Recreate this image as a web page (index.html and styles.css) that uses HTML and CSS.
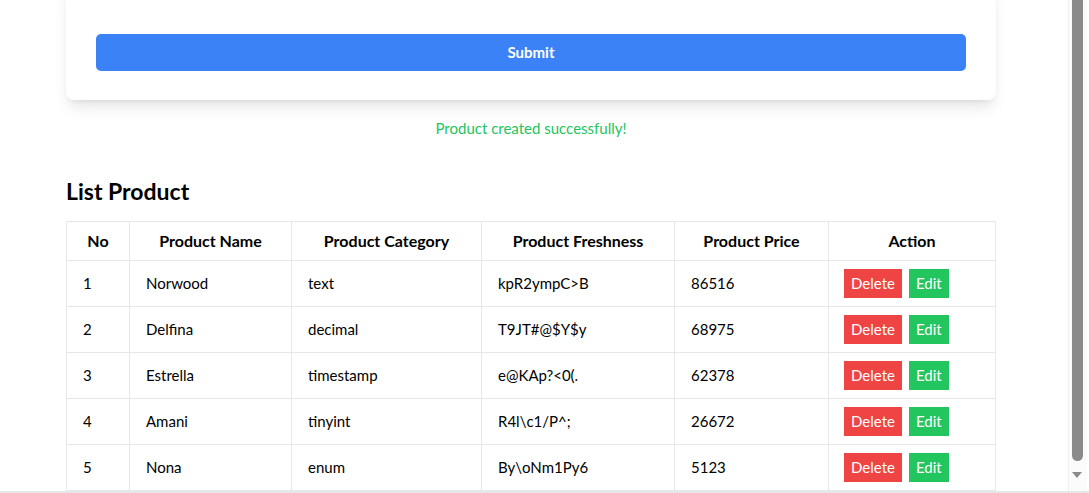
FILE: index.html
```html
<!DOCTYPE html>
<html lang="en">
<head>
<meta charset="utf-8">
<title>Products</title>
<link rel="stylesheet" href="styles.css">
</head>
<body>
<div class="viewport">
  <main class="container">
    <section class="card">
      <button class="submit" type="button">Submit</button>
    </section>
    <p class="success">Product created successfully!</p>
    <h2 class="title">List Product</h2>
    <table class="products">
      <thead>
        <tr>
          <th class="c-no">No</th>
          <th class="c-name">Product Name</th>
          <th class="c-cat">Product Category</th>
          <th class="c-fresh">Product Freshness</th>
          <th class="c-price">Product Price</th>
          <th class="c-act">Action</th>
        </tr>
      </thead>
      <tbody>
        <tr><td>1</td><td>Norwood</td><td>text</td><td>kpR2ympC&gt;B</td><td>86516</td><td class="actions"><span class="btn del">Delete</span><span class="btn edit">Edit</span></td></tr>
        <tr><td>2</td><td>Delfina</td><td>decimal</td><td>T9JT#@$Y$y</td><td>68975</td><td class="actions"><span class="btn del">Delete</span><span class="btn edit">Edit</span></td></tr>
        <tr><td>3</td><td>Estrella</td><td>timestamp</td><td>e@KAp?&lt;0(.</td><td>62378</td><td class="actions"><span class="btn del">Delete</span><span class="btn edit">Edit</span></td></tr>
        <tr><td>4</td><td>Amani</td><td>tinyint</td><td>R4l\c1/P^;</td><td>26672</td><td class="actions"><span class="btn del">Delete</span><span class="btn edit">Edit</span></td></tr>
        <tr><td>5</td><td>Nona</td><td>enum</td><td>By\oNm1Py6</td><td>5123</td><td class="actions"><span class="btn del">Delete</span><span class="btn edit">Edit</span></td></tr>
      </tbody>
    </table>
  </main>
</div>
<div class="scrollbar"><div class="thumb"></div><div class="arrow"></div></div>
<div class="winedge"></div>
</body>
</html>
```
FILE: styles.css
```css
* { box-sizing: border-box; }
html, body { margin: 0; padding: 0; height: 100%; overflow: hidden; background: #fff; }
body { font-family: Lato, "Noto Sans", sans-serif; color: #000; }
.viewport { width: 1062px; }
.container { width: 930px; margin: 0 auto; }
.card {
  margin-top: -20px;
  padding: 54px 30px 29px;
  background: #fff;
  border-radius: 8px;
  box-shadow: 0 10px 15px -3px rgba(0,0,0,0.1), 0 4px 6px -4px rgba(0,0,0,0.1);
}
.submit {
  display: block; width: 100%; height: 37px; border: 0; border-radius: 5px; padding: 0 0 2px;
  background: #3b82f6; color: #fff; font: 700 15px Lato, sans-serif;
}
.success { margin: 16px 0 0; text-align: center; color: #22c55e; font-size: 15px; line-height: 24px; }
.title { margin: 35px 0 14px; font-size: 23px; line-height: 32px; font-weight: 700; }
.products { width: 930px; border-collapse: collapse; table-layout: fixed; font-size: 15px; }
.products th, .products td { border: 1px solid #e5e7eb; padding: 0 16px 2px; }
.products th { height: 39px; font-weight: 700; font-size: 16px; text-align: center; }
.products td { height: 46px; text-align: left; }
.products td.actions { padding: 0 8px 0 15px; }
.c-no { width: 63px; } .c-name { width: 162px; } .c-cat { width: 190px; }
.c-fresh { width: 193px; } .c-price { width: 154px; } .c-act { width: 167px; }
.btn { display: inline-block; height: 29px; line-height: 28px; padding: 0 7px; color: #fff; vertical-align: middle; }
.del { background: #ef4444; margin-right: 7px; }
.edit { background: #22c55e; }
.scrollbar { position: fixed; top: 0; right: 2px; width: 19px; height: 491px; background: #fbfbfb; border-left: 1px solid #f0f0f0; }
.thumb { position: absolute; left: 3px; top: 0; width: 11px; height: 461px; background: #8a8a8a; border-radius: 0 0 6px 6px; }
.arrow { position: absolute; left: 3px; top: 472px; width: 0; height: 0; border-left: 5.5px solid transparent; border-right: 5.5px solid transparent; border-top: 6px solid #8a8a8a; }
.winedge { position: fixed; left: 0; right: 0; bottom: 0; height: 2px; background: #e6e6e6; }
```
